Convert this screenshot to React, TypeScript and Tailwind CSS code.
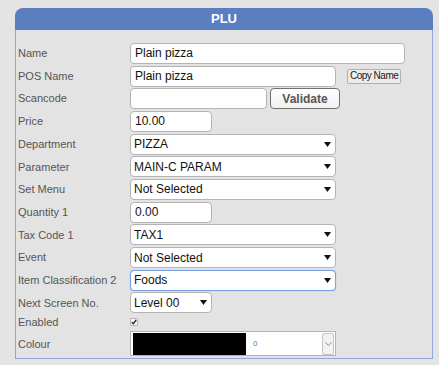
import React from "react";

const font = { fontFamily: '"Liberation Sans", Arial, sans-serif' };

function Arrow() {
  return (
    <svg width="7" height="5" viewBox="0 0 7 5" className="shrink-0">
      <path d="M0 0 H7 L3.5 5 Z" fill="#111" />
    </svg>
  );
}

function TextBox({ value, w }: { value: string; w: string }) {
  return (
    <div
      className={`${w} h-[21px] flex items-center bg-white border border-[#b4b4b4] rounded-[4px] pl-[4px] text-[12px] text-[#111]`}
    >
      {value}
    </div>
  );
}

function SelectBox({ value, w, focus }: { value: string; w: string; focus?: boolean }) {
  return (
    <div
      className={`${w} h-[21px] flex items-center justify-between bg-white border rounded-[4px] pl-[3px] pr-[4px] text-[12px] text-[#111] ${
        focus ? "border-[#7aa0e6] shadow-[0_0_1px_#7aa0e6]" : "border-[#b4b4b4]"
      }`}
    >
      <span>{value}</span>
      <Arrow />
    </div>
  );
}

function Row({ label, children }: { label: string; children: React.ReactNode }) {
  return (
    <div className="flex items-center h-[22.7px]">
      <div className="w-[114px] pl-[2px] text-[11px] text-[#555]">{label}</div>
      <div className="flex items-center">{children}</div>
    </div>
  );
}

export default function App() {
  return (
    <div style={font} className="w-[439px] h-[365px] bg-[#e4e4e4] pt-[8px] pl-[15px]">
      <div className="w-[418px]">
        <div className="h-[22px] bg-[#5b7ec0] rounded-t-[8px] flex items-center justify-center text-white font-bold text-[13px]">
          PLU
        </div>
        <div className="bg-[#e3e3e3] border-x border-b border-[#8ea8dc] pt-[12px] pb-[1px]">
          <Row label="Name">
            <TextBox value="Plain pizza" w="w-[275px]" />
          </Row>
          <Row label="POS Name">
            <TextBox value="Plain pizza" w="w-[206px]" />
            <button className="ml-[11px] h-[15px] px-[2px] bg-[#ececec] border border-[#b0b0b0] rounded-[2px] text-[10px] tracking-[-0.5px] text-[#222] leading-none">
              Copy Name
            </button>
          </Row>
          <Row label="Scancode">
            <TextBox value="" w="w-[137px]" />
            <button className="ml-[3px] w-[70px] h-[21px] bg-gradient-to-b from-white to-[#f0f0f0] border border-[#707070] rounded-[4px] text-[12px] font-bold text-[#555]">
              Validate
            </button>
          </Row>
          <Row label="Price">
            <TextBox value="10.00" w="w-[82px]" />
          </Row>
          <Row label="Department">
            <SelectBox value="PIZZA" w="w-[206px]" />
          </Row>
          <Row label="Parameter">
            <SelectBox value="MAIN-C PARAM" w="w-[206px]" />
          </Row>
          <Row label="Set Menu">
            <SelectBox value="Not Selected" w="w-[206px]" />
          </Row>
          <Row label="Quantity 1">
            <TextBox value="0.00" w="w-[82px]" />
          </Row>
          <Row label="Tax Code 1">
            <SelectBox value="TAX1" w="w-[206px]" />
          </Row>
          <Row label="Event">
            <SelectBox value="Not Selected" w="w-[206px]" />
          </Row>
          <Row label="Item Classification 2">
            <SelectBox value="Foods" w="w-[206px]" focus />
          </Row>
          <Row label="Next Screen No.">
            <SelectBox value="Level 00" w="w-[82px]" />
          </Row>
          <div className="flex items-center h-[16px]">
            <div className="w-[114px] pl-[2px] text-[11px] text-[#555]">Enabled</div>
            <div className="w-[8px] h-[8px] bg-[#f4f4f4] border border-[#b8b8b8] rounded-[1px] flex items-center justify-center">
              <svg width="6" height="6" viewBox="0 0 6 6">
                <path d="M0.8 3.2 L2.3 4.8 L5.2 1" stroke="#222" strokeWidth="1.3" fill="none" />
              </svg>
            </div>
          </div>
          <div className="flex items-center h-[27px]">
            <div className="w-[114px] pl-[2px] text-[11px] text-[#555]">Colour</div>
            <div className="w-[206px] h-[25px] flex items-center bg-white border border-[#b4b4b4] pl-[2px] pr-[1px]">
              <div className="w-[113px] h-[22px] bg-black" />
              <span className="ml-[7px] text-[8px] text-[#5577cc]">0</span>
              <div className="ml-auto w-[12px] h-[22px] bg-[#f2f2f2] border border-[#c4c4c4] rounded-[2px] flex items-center justify-center">
                <svg width="7" height="4" viewBox="0 0 7 4">
                  <path d="M0.5 0.5 L3.5 3.5 L6.5 0.5" stroke="#888" strokeWidth="1" fill="none" />
                </svg>
              </div>
            </div>
          </div>
        </div>
      </div>
    </div>
  );
}
